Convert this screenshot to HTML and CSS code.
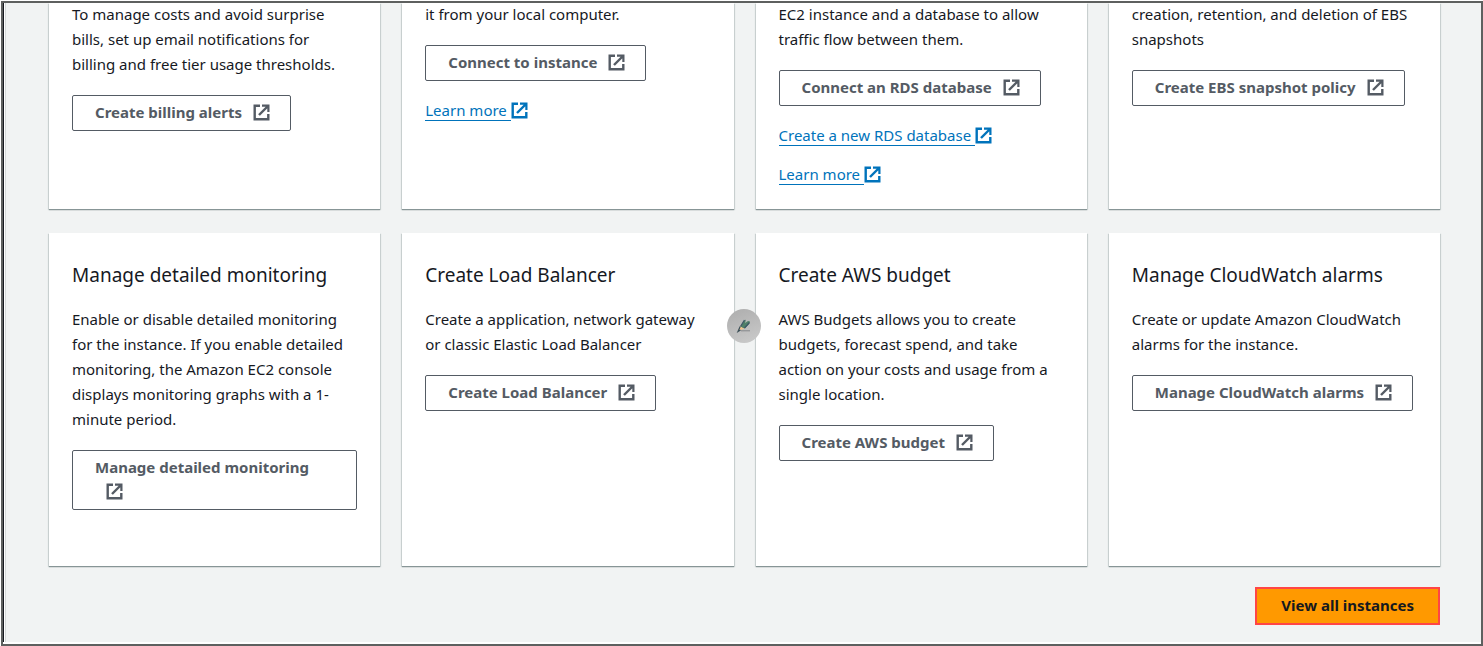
FILE: index.html
```
<!DOCTYPE html>
<html lang="en">
<head>
<meta charset="utf-8">
<title>Launch an instance – next steps</title>
<link rel="stylesheet" href="styles.css">
</head>
<body>
<svg class="defs" aria-hidden="true">
  <symbol id="external" viewBox="0 0 17 17">
    <path d="M7 1.700H1.700v13.600h13.600V10" fill="none" stroke="currentColor" stroke-width="2.400"/>
    <path d="M6 11 14 3" fill="none" stroke="currentColor" stroke-width="2.400"/>
    <path d="M9 .5h7.500V8h-2.200V4.500L12.500 2.700H9z" fill="currentColor"/>
  </symbol>
</svg>
<main class="frame">
  <div class="panel">
    <div class="cards">
      <section class="card card-cut">
        <p>To manage costs and avoid surprise<br>bills, set up email notifications for<br>billing and free tier usage thresholds.</p>
        <button class="btn" type="button">Create billing alerts<svg class="icon"><use href="#external"/></svg></button>
      </section>
      <section class="card card-cut">
        <p>it from your local computer.</p>
        <button class="btn" type="button">Connect to instance<svg class="icon"><use href="#external"/></svg></button>
        <div class="links">
          <a href="#"><span class="label">Learn more&nbsp;</span><svg class="icon"><use href="#external"/></svg></a>
        </div>
      </section>
      <section class="card card-cut">
        <p>EC2 instance and a database to allow<br>traffic flow between them.</p>
        <button class="btn" type="button">Connect an RDS database<svg class="icon"><use href="#external"/></svg></button>
        <div class="links">
          <a href="#"><span class="label">Create a new RDS database&nbsp;</span><svg class="icon"><use href="#external"/></svg></a>
          <a href="#"><span class="label">Learn more&nbsp;</span><svg class="icon"><use href="#external"/></svg></a>
        </div>
      </section>
      <section class="card card-cut">
        <p>creation, retention, and deletion of EBS<br>snapshots</p>
        <button class="btn" type="button">Create EBS snapshot policy<svg class="icon"><use href="#external"/></svg></button>
      </section>

      <section class="card">
        <h2>Manage detailed monitoring</h2>
        <p>Enable or disable detailed monitoring<br>for the instance. If you enable detailed<br>monitoring, the Amazon EC2 console<br>displays monitoring graphs with a 1-<br>minute period.</p>
        <button class="btn" type="button">Manage detailed monitoring<svg class="icon"><use href="#external"/></svg></button>
      </section>
      <section class="card">
        <h2>Create Load Balancer</h2>
        <p>Create a application, network gateway<br>or classic Elastic Load Balancer</p>
        <button class="btn" type="button">Create Load Balancer<svg class="icon"><use href="#external"/></svg></button>
      </section>
      <section class="card">
        <h2>Create AWS budget</h2>
        <p>AWS Budgets allows you to create<br>budgets, forecast spend, and take<br>action on your costs and usage from a<br>single location.</p>
        <button class="btn" type="button">Create AWS budget<svg class="icon"><use href="#external"/></svg></button>
      </section>
      <section class="card">
        <h2>Manage CloudWatch alarms</h2>
        <p>Create or update Amazon CloudWatch<br>alarms for the instance.</p>
        <button class="btn" type="button">Manage CloudWatch alarms<svg class="icon"><use href="#external"/></svg></button>
      </section>
    </div>
    <div class="actions">
      <button class="primary" type="button">View all instances</button>
    </div>
  </div>
  <button class="edit" type="button" aria-label="Edit">
    <svg viewBox="0 0 34 34" width="34" height="34">
      <path d="M13.500 17.500 17 12l2-1.500L18 14l3-2 2 .5-1 2.500-4.500 4.500-2-.5z" fill="#4f8069"/>
      <path d="M13.500 17.500 17.500 11M17.500 19l5-5.500" stroke="#3d5866" stroke-width="1.300" fill="none"/>
      <path d="M13.500 17.500 12 21.500l5.500-2-2-.8z" fill="#f0c48e"/>
      <path d="M13.200 17.500 11 22.500l2.500-1.500" stroke="#3d5058" stroke-width="1.200" fill="none"/>
      <path d="M14 21.800h9" stroke="#85888a" stroke-width="1"/>
    </svg>
  </button>
</main>
</body>
</html>
```
FILE: styles.css
```
* {
  box-sizing: border-box;
}

body {
  margin: 0;
  padding: 1px 0 0 1px;
  background: #fff;
  color: #16191f;
  font: 15px/25px "Noto Sans", "Open Sans", sans-serif;
}

.defs {
  position: absolute;
  width: 0;
  height: 0;
}

.frame {
  position: relative;
  min-height: calc(100vh - 1px);
  padding-bottom: 2px;
  border: 2px solid #5e605f;
  display: flex;
  flex-direction: column;
}

.panel {
  flex: 1;
  padding: 0 41px 17px 45px;
  border-left: 1px solid #16191f;
  background: #f1f3f3;
  box-shadow: inset 1px 0 #fff, inset 2px 0 #d5d9d9;
}

.cards {
  display: grid;
  grid-template-columns: repeat(4, minmax(0, 1fr));
  gap: 24px 22px;
}

.card {
  min-height: 333px;
  padding: 26px 23px 22px;
  background: #fff;
  box-shadow: 0 1px 1px #879596, 1px 1px 1px #d5dbdb, -1px 1px 1px #d5dbdb;
}

.card-cut {
  min-height: 0;
  padding-top: 0;
}

h2 {
  margin: 0 0 16px;
  font-size: 19px;
  line-height: 32px;
  font-weight: 400;
}

p {
  margin: 0 0 18px;
}

.card-cut p {
  margin-top: -1px;
}

.icon {
  width: 17px;
  height: 17px;
  vertical-align: -3px;
}

.btn {
  display: block;
  max-width: 100%;
  padding: 4px 20px 6px 22px;
  border: 1px solid #545b64;
  border-radius: 2px;
  background: #fff;
  color: #545b64;
  font: 700 15px/24px "Noto Sans", "Open Sans", sans-serif;
  text-align: left;
}

.btn .icon {
  margin-left: 11px;
}

.links {
  display: flex;
  flex-direction: column;
  align-items: flex-start;
  gap: 14px;
  margin-top: 17px;
}

a {
  color: #0073bb;
  text-decoration: none;
}

.label {
  border-bottom: 1px solid #0073bb;
}

.actions {
  display: flex;
  justify-content: flex-end;
  margin-top: 21px;
}

.primary {
  padding: 4px 24px 6px;
  border: 2px solid #ff4545;
  background: #ff9900;
  color: #16191f;
  font: 700 15px/24px "Noto Sans", "Open Sans", sans-serif;
}

.edit {
  position: absolute;
  left: 724px;
  top: 306px;
  width: 34px;
  height: 34px;
  padding: 0;
  border: 0;
  border-radius: 50%;
  background: linear-gradient(160deg, #adadad, #cbcbcb);
}

.edit svg {
  display: block;
}
```
